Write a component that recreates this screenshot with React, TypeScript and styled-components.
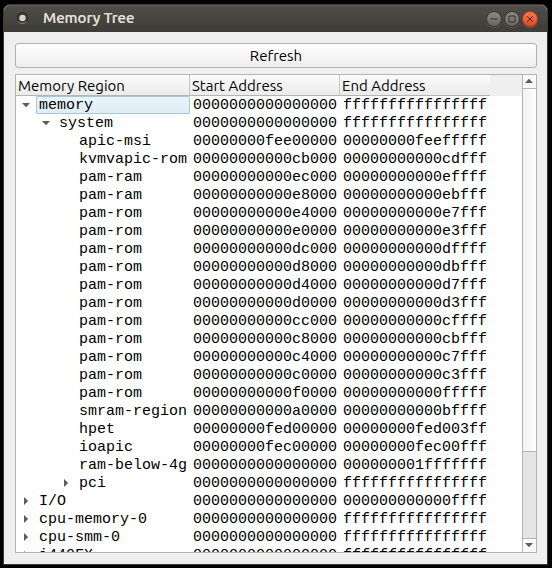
import React, { useState } from 'react';
import styled, { createGlobalStyle } from 'styled-components';

const GlobalStyle = createGlobalStyle`
  *, *::before, *::after { box-sizing: border-box; }
  html, body { margin: 0; background: #000; }
  button { font: inherit; color: inherit; margin: 0; padding: 0; border: 0; background: none; }
`;

const Desktop = styled.div`
  display: flex;
  height: 100vh;
  padding: 4px 4px 3px 3px;
  background: #000;
  color: #000;
  font-family: Ubuntu, 'Noto Sans', sans-serif;
  font-size: 15px;
`;

const Window = styled.main`
  flex: 1;
  min-width: 0;
  display: flex;
  flex-direction: column;
  overflow: hidden;
  border: 1px solid #3a3935;
  border-radius: 7px 7px 0 0;
  background: #efefef;
`;

const TitleBar = styled.header`
  flex: none;
  display: flex;
  align-items: center;
  height: 27px;
  padding: 0 9px 0 12px;
  background: linear-gradient(#504e48, #3d3c37);
  box-shadow: inset 0 1px #5d5b54;
`;

const Title = styled.h1`
  flex: 1;
  margin: 0 0 0 14px;
  padding-bottom: 1px;
  color: #dfdbd2;
  font-size: 15px;
  line-height: 20px;
  font-weight: 500;
  text-shadow: 0 0 currentColor;
`;

const WindowButtons = styled.div`
  display: flex;
  gap: 2px;
  padding-top: 1px;
`;

const WindowButton = styled.button<{ $close?: boolean }>`
  display: flex;
  width: 16px;
  height: 16px;
  border: 1px solid ${(p) => (p.$close ? '#a8401f' : '#35342f')};
  border-radius: 50%;
  background: ${(p) => (p.$close ? 'linear-gradient(#f87850, #e3481c)' : 'linear-gradient(#8b8981, #67655e)')};
  box-shadow: 0 1px #5b5953;
`;

const Content = styled.div`
  flex: 1;
  min-height: 0;
  display: flex;
  flex-direction: column;
  gap: 6px;
  padding: 11px 10px 11px 11px;
`;

const RefreshButton = styled.button`
  flex: none;
  height: 25px;
  border: 1px solid #b1b1b1;
  border-radius: 3px;
  background: linear-gradient(#fefefe, #ededed);
  font-size: 15px;
  line-height: 20px;
`;

const TreeFrame = styled.section`
  flex: 1;
  min-height: 0;
  display: flex;
  border: 1px solid #b4b4b4;
  background: #fff;
`;

const Viewport = styled.div`
  flex: 1;
  min-width: 0;
  overflow: hidden;
  background: linear-gradient(#efefef, #efefef) 0 0 / 100% 21px no-repeat;
`;

const Table = styled.table`
  width: 474px;
  table-layout: fixed;
  border-collapse: separate;
  border-spacing: 0;
`;

const HeadCell = styled.th`
  height: 21px;
  padding: 2px 0 0 2px;
  border-bottom: 1px solid #b4b4b4;
  background: linear-gradient(#fbfbfb, #ebebeb);
  text-align: left;
  font-size: 15px;
  line-height: 18px;
  font-weight: 400;
  white-space: nowrap;
  &:not(:last-child) { border-right: 1px solid #c8c8c8; }
`;

const Cell = styled.td`
  height: 18px;
  padding: 2px 0 0 3px;
  font-family: 'Liberation Mono', monospace;
  font-size: 15px;
  line-height: 16px;
  white-space: nowrap;
`;

const TreeCell = styled(Cell)<{ $depth: number }>`
  padding-top: 0;
  padding-left: ${(p) => p.$depth * 20}px;
`;

const Node = styled.div`
  display: flex;
  height: 18px;
`;

const Expander = styled.button`
  flex: none;
  display: flex;
  width: 20px;
  height: 18px;
`;

const Indent = styled.span`
  flex: none;
  width: 20px;
`;

const NodeLabel = styled.span<{ $current?: boolean }>`
  flex: 1;
  padding: 2px 0 0 2px;
  line-height: 14px;
  border: 1px solid ${(p) => (p.$current ? '#a9c6d8' : 'transparent')};
  border-radius: 1px;
  background: ${(p) => (p.$current ? 'linear-gradient(#e9f4fb, #e0edf5)' : 'none')};
`;

const ScrollBar = styled.div`
  flex: none;
  display: flex;
  flex-direction: column;
  width: 14px;
  border-left: 1px solid #b4b4b4;
  background: #e4e4e4;
`;

const ScrollArrow = styled.button`
  flex: none;
  display: flex;
  height: 13px;
  background: #fafafa;
`;

const ScrollTrack = styled.div`
  flex: 1;
  border: solid #b4b4b4;
  border-width: 1px 0;
`;

const ScrollThumb = styled.div`
  height: 80.8%;
  border-bottom: 1px solid #b4b4b4;
  background: linear-gradient(90deg, #f1f1f1, #fff);
`;

type Region = { name: string; depth: number; start: string; end: string; branch?: boolean; open?: boolean };

const zero = '0000000000000000';
const full = 'ffffffffffffffff';
const leaf = (name: string, start: string, end: string): Region => ({
  name, depth: 2, start: start.padStart(16, '0'), end: end.padStart(16, '0'),
});

const regions: Region[] = [
  { name: 'memory', depth: 0, start: zero, end: full, branch: true, open: true },
  { name: 'system', depth: 1, start: zero, end: full, branch: true, open: true },
  leaf('apic-msi', 'fee00000', 'feefffff'),
  leaf('kvmvapic-rom', 'cb000', 'cdfff'),
  leaf('pam-ram', 'ec000', 'effff'),
  leaf('pam-ram', 'e8000', 'ebfff'),
  leaf('pam-rom', 'e4000', 'e7fff'),
  leaf('pam-rom', 'e0000', 'e3fff'),
  leaf('pam-rom', 'dc000', 'dffff'),
  leaf('pam-rom', 'd8000', 'dbfff'),
  leaf('pam-rom', 'd4000', 'd7fff'),
  leaf('pam-rom', 'd0000', 'd3fff'),
  leaf('pam-rom', 'cc000', 'cffff'),
  leaf('pam-rom', 'c8000', 'cbfff'),
  leaf('pam-rom', 'c4000', 'c7fff'),
  leaf('pam-rom', 'c0000', 'c3fff'),
  leaf('pam-rom', 'f0000', 'fffff'),
  leaf('smram-region', 'a0000', 'bffff'),
  leaf('hpet', 'fed00000', 'fed003ff'),
  leaf('ioapic', 'fec00000', 'fec00fff'),
  leaf('ram-below-4g', '0', '1fffffff'),
  { name: 'pci', depth: 2, start: zero, end: full, branch: true },
  { name: 'I/O', depth: 0, start: zero, end: '000000000000ffff', branch: true },
  { name: 'cpu-memory-0', depth: 0, start: zero, end: full, branch: true },
  { name: 'cpu-smm-0', depth: 0, start: zero, end: full, branch: true },
  { name: 'i440FX', depth: 0, start: zero, end: full, branch: true },
];

const BranchArrow = ({ open }: { open?: boolean }) => (
  <svg width="20" height="18" viewBox="0 0 20 18" fill="#5c5c5c" aria-hidden="true">
    <path d={open ? 'M6 7H14L10 11.200Z' : 'M8 5V13L12.200 9Z'} />
  </svg>
);

const ScrollGlyph = ({ down }: { down?: boolean }) => (
  <svg width="13" height="13" viewBox="0 0 13 13" fill="#5c5c5c" aria-hidden="true">
    <path d={down ? 'M2 4H10L6 8.200Z' : 'M2 8H10L6 3.800Z'} />
  </svg>
);

const AppIcon = () => (
  <svg width="13" height="13" viewBox="0 0 13 13" aria-hidden="true">
    <circle cx="6.500" cy="6" r="6" fill="#35342f" />
    <path d="M2.500 10A6 6 0 0 0 10.500 10" fill="none" stroke="#8a8881" />
    <circle cx="6.500" cy="6" r="3.200" fill="#d5d2ca" />
  </svg>
);

const Glyph = ({ d }: { d: string }) => (
  <svg width="14" height="14" viewBox="0 0 14 14" fill="none" stroke="#33322d" aria-hidden="true">
    <path d={d} />
  </svg>
);

export default function App() {
  const [closed, setClosed] = useState<number[]>([]);
  const toggle = (i: number) =>
    setClosed((c) => (c.includes(i) ? c.filter((x) => x !== i) : [...c, i]));
  const hidden = (i: number) =>
    closed.some((c) => {
      if (!regions[c].open || c >= i) return false;
      return regions.slice(c + 1, i + 1).every((r) => r.depth > regions[c].depth);
    });

  return (
    <>
      <GlobalStyle />
      <Desktop>
        <Window>
          <TitleBar>
            <AppIcon />
            <Title>Memory Tree</Title>
            <WindowButtons>
              <WindowButton aria-label="Minimize"><Glyph d="M3.500 7H10.500" /></WindowButton>
              <WindowButton aria-label="Maximize"><Glyph d="M4 4H10V10H4Z" /></WindowButton>
              <WindowButton aria-label="Close" $close><Glyph d="M4 4L10 10M10 4L4 10" /></WindowButton>
            </WindowButtons>
          </TitleBar>
          <Content>
            <RefreshButton>Refresh</RefreshButton>
            <TreeFrame>
              <Viewport>
                <Table>
                  <colgroup>
                    <col width="174" />
                    <col width="150" />
                    <col width="150" />
                  </colgroup>
                  <thead>
                    <tr>
                      <HeadCell scope="col">Memory Region</HeadCell>
                      <HeadCell scope="col">Start Address</HeadCell>
                      <HeadCell scope="col">End Address</HeadCell>
                    </tr>
                  </thead>
                  <tbody>
                    {regions.map((r, i) => {
                      if (hidden(i)) return null;
                      const open = r.open && !closed.includes(i);
                      return (
                        <tr key={i}>
                          <TreeCell $depth={r.depth}>
                            <Node>
                              {r.branch ? (
                                <Expander aria-label={`Toggle ${r.name}`} aria-expanded={!!open} onClick={() => toggle(i)}>
                                  <BranchArrow open={open} />
                                </Expander>
                              ) : (
                                <Indent />
                              )}
                              <NodeLabel $current={i === 0}>{r.name}</NodeLabel>
                            </Node>
                          </TreeCell>
                          <Cell>{r.start}</Cell>
                          <Cell>{r.end}</Cell>
                        </tr>
                      );
                    })}
                  </tbody>
                </Table>
              </Viewport>
              <ScrollBar>
                <ScrollArrow aria-label="Scroll up"><ScrollGlyph /></ScrollArrow>
                <ScrollTrack><ScrollThumb /></ScrollTrack>
                <ScrollArrow aria-label="Scroll down"><ScrollGlyph down /></ScrollArrow>
              </ScrollBar>
            </TreeFrame>
          </Content>
        </Window>
      </Desktop>
    </>
  );
}
